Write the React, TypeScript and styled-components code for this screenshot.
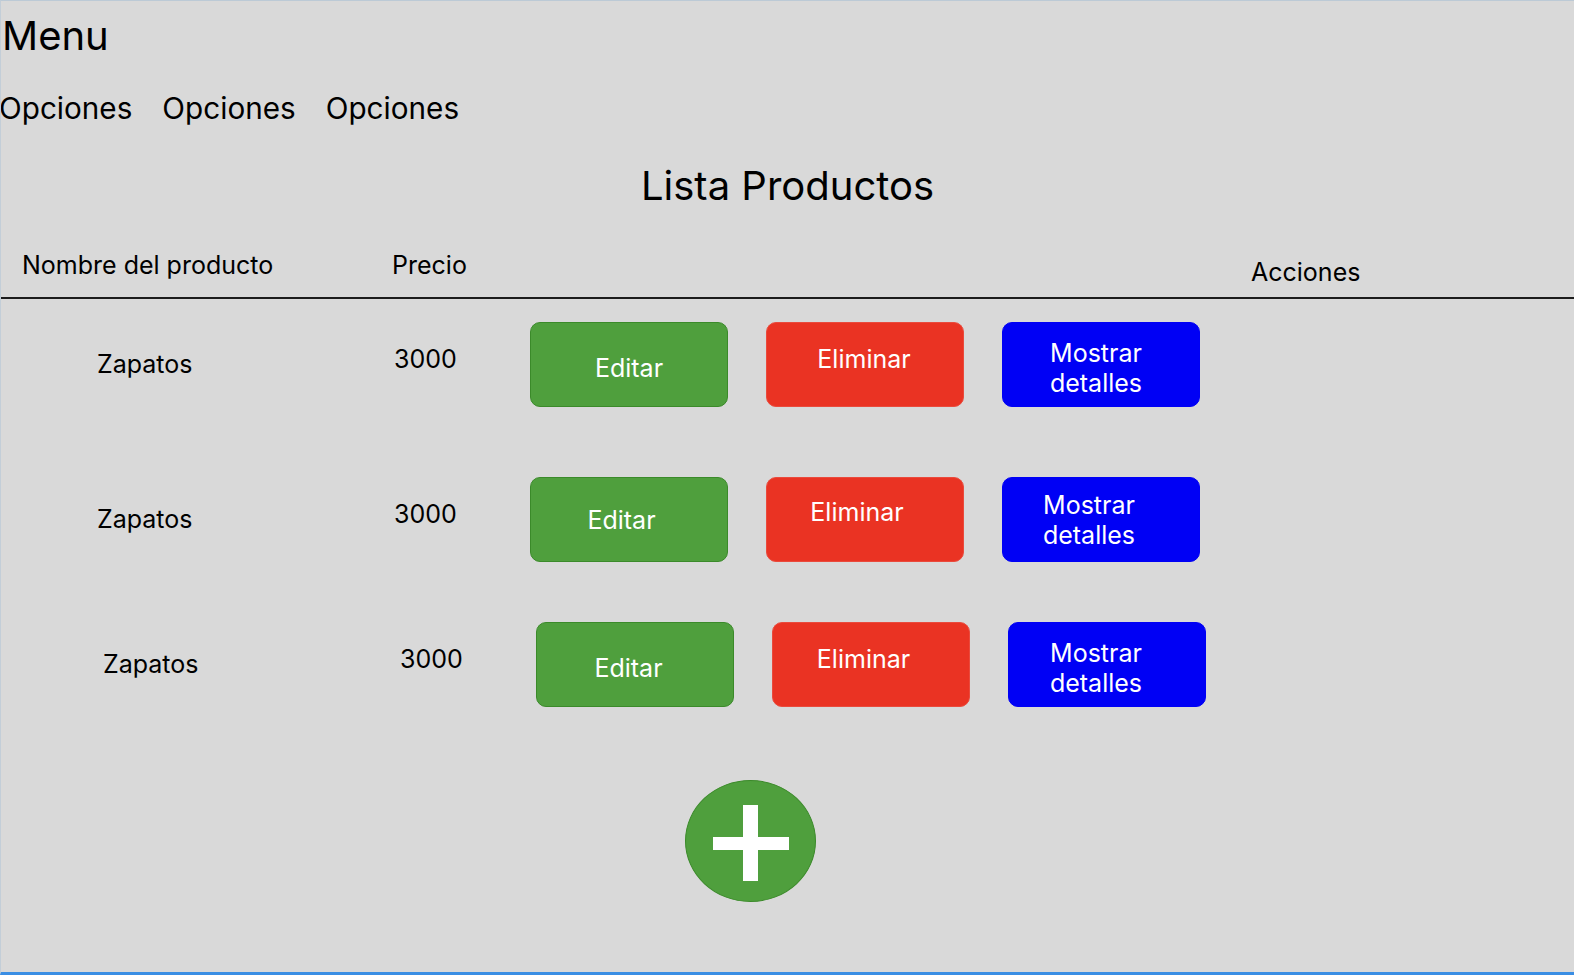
import React from 'react';
import styled, { createGlobalStyle } from 'styled-components';

const Global = createGlobalStyle`
  html, body { margin: 0; padding: 0; background: #d9d9d9; }
  body { font-family: Inter, "Noto Sans", sans-serif; color: #000; }
  * { box-sizing: border-box; }
`;

const Frame = styled.div`
  width: 1574px;
  height: 975px;
  overflow: hidden;
  background: #d9d9d9;
  border-top: 1px solid #bccad6;
  border-left: 1px solid #c3ced8;
  border-bottom: 3px solid #3a8ee4;
  display: flex;
  flex-direction: column;
`;

const MenuTitle = styled.h1`
  margin: 10.5px 0 0 1px;
  font-size: 40px;
  line-height: 48px;
  font-weight: 400;
`;

const Nav = styled.nav`
  display: flex;
  gap: 30px;
  margin: 30px 0 0 -2px;
`;

const NavItem = styled.span`
  font-size: 29.7px;
  line-height: 36px;
`;

const PageTitle = styled.h2`
  margin: 36.5px 0 0;
  font-size: 40px;
  line-height: 48px;
  font-weight: 400;
  text-align: center;
`;

const HeaderRow = styled.div`
  display: flex;
  align-items: flex-start;
  margin-top: 39.5px;
  padding: 0 0 10px 21px;
  border-bottom: 2px solid #1c1c1c;
`;

const HeadCell = styled.span<{ $width?: number; $top?: number }>`
  font-size: 25px;
  line-height: 30px;
  ${(p) => (p.$width ? `width: ${p.$width}px; flex: none;` : '')}
  margin-top: ${(p) => p.$top ?? 0}px;
`;

const Row = styled.div<{ $top: number; $shift: number }>`
  display: flex;
  align-items: flex-start;
  height: 85px;
  margin-top: ${(p) => p.$top}px;
  padding-left: ${(p) => 96 + p.$shift}px;
`;

const Cell = styled.span<{ $width: number; $top: number }>`
  width: ${(p) => p.$width}px;
  flex: none;
  padding-top: ${(p) => p.$top}px;
  font-size: 25px;
  line-height: 30px;
`;

const Actions = styled.div`
  display: flex;
  gap: 38px;
`;

const variants = {
  edit: { bg: '#4f9f3d', border: '#3b8a2a' },
  delete: { bg: '#ea3323', border: '#ea4a3c' },
  details: { bg: '#0000f5', border: '#0000f5' },
};

const ActionButton = styled.button<{
  $variant: keyof typeof variants;
  $dx: number;
  $dy: number;
}>`
  width: 198px;
  height: 85px;
  flex: none;
  display: flex;
  align-items: center;
  justify-content: center;
  text-align: center;
  border-radius: 10px;
  border: 1px solid ${(p) => variants[p.$variant].border};
  background: ${(p) => variants[p.$variant].bg};
  color: #fff;
  font-family: Inter, "Noto Sans", sans-serif;
  font-size: 25px;
  line-height: 30px;
  cursor: pointer;
  padding: ${(p) => Math.max(0, 2 * p.$dy)}px ${(p) => Math.max(0, -2 * p.$dx)}px
    ${(p) => Math.max(0, -2 * p.$dy)}px ${(p) => Math.max(0, 2 * p.$dx)}px;
`;

const AddButton = styled.button`
  width: 131px;
  height: 122px;
  margin: 73px 0 0 684px;
  padding: 0;
  align-self: flex-start;
  border-radius: 50%;
  border: 1px solid #3b8a2a;
  background: #4f9f3d;
  display: flex;
  cursor: pointer;
`;

type Offsets = [number, number];
const rows: {
  top: number;
  shift: number;
  offsets: [Offsets, Offsets, Offsets];
}[] = [
  { top: 23.5, shift: 0, offsets: [[0, 3], [-1, -6], [-5, 3]] },
  { top: 70, shift: 0, offsets: [[-7.5, 0], [-8, -8], [-12, 0]] },
  { top: 60, shift: 6, offsets: [[-6.5, 3.5], [-7.5, -5.5], [-11, 3.5]] },
];

export default function App() {
  return (
    <>
      <Global />
      <Frame>
        <MenuTitle>Menu</MenuTitle>
        <Nav>
          <NavItem>Opciones</NavItem>
          <NavItem>Opciones</NavItem>
          <NavItem>Opciones</NavItem>
        </Nav>
        <PageTitle>Lista Productos</PageTitle>
        <HeaderRow>
          <HeadCell $width={370}>Nombre del producto</HeadCell>
          <HeadCell $width={859}>Precio</HeadCell>
          <HeadCell $top={7}>Acciones</HeadCell>
        </HeaderRow>
        {rows.map((r, i) => (
          <Row key={i} $top={r.top} $shift={r.shift}>
            <Cell $width={297} $top={27}>Zapatos</Cell>
            <Cell $width={136} $top={22}>3000</Cell>
            <Actions>
              <ActionButton $variant="edit" $dx={r.offsets[0][0]} $dy={r.offsets[0][1]}>
                Editar
              </ActionButton>
              <ActionButton $variant="delete" $dx={r.offsets[1][0]} $dy={r.offsets[1][1]}>
                Eliminar
              </ActionButton>
              <ActionButton $variant="details" $dx={r.offsets[2][0]} $dy={r.offsets[2][1]}>
                Mostrar
                <br />
                detalles
              </ActionButton>
            </Actions>
          </Row>
        ))}
        <AddButton aria-label="Agregar producto">
          <svg width="129" height="120" viewBox="0 0 129 120">
            <rect x="27" y="56" width="76" height="13" fill="#fff" />
            <rect x="57" y="24" width="15" height="76" fill="#fff" />
          </svg>
        </AddButton>
      </Frame>
    </>
  );
}
